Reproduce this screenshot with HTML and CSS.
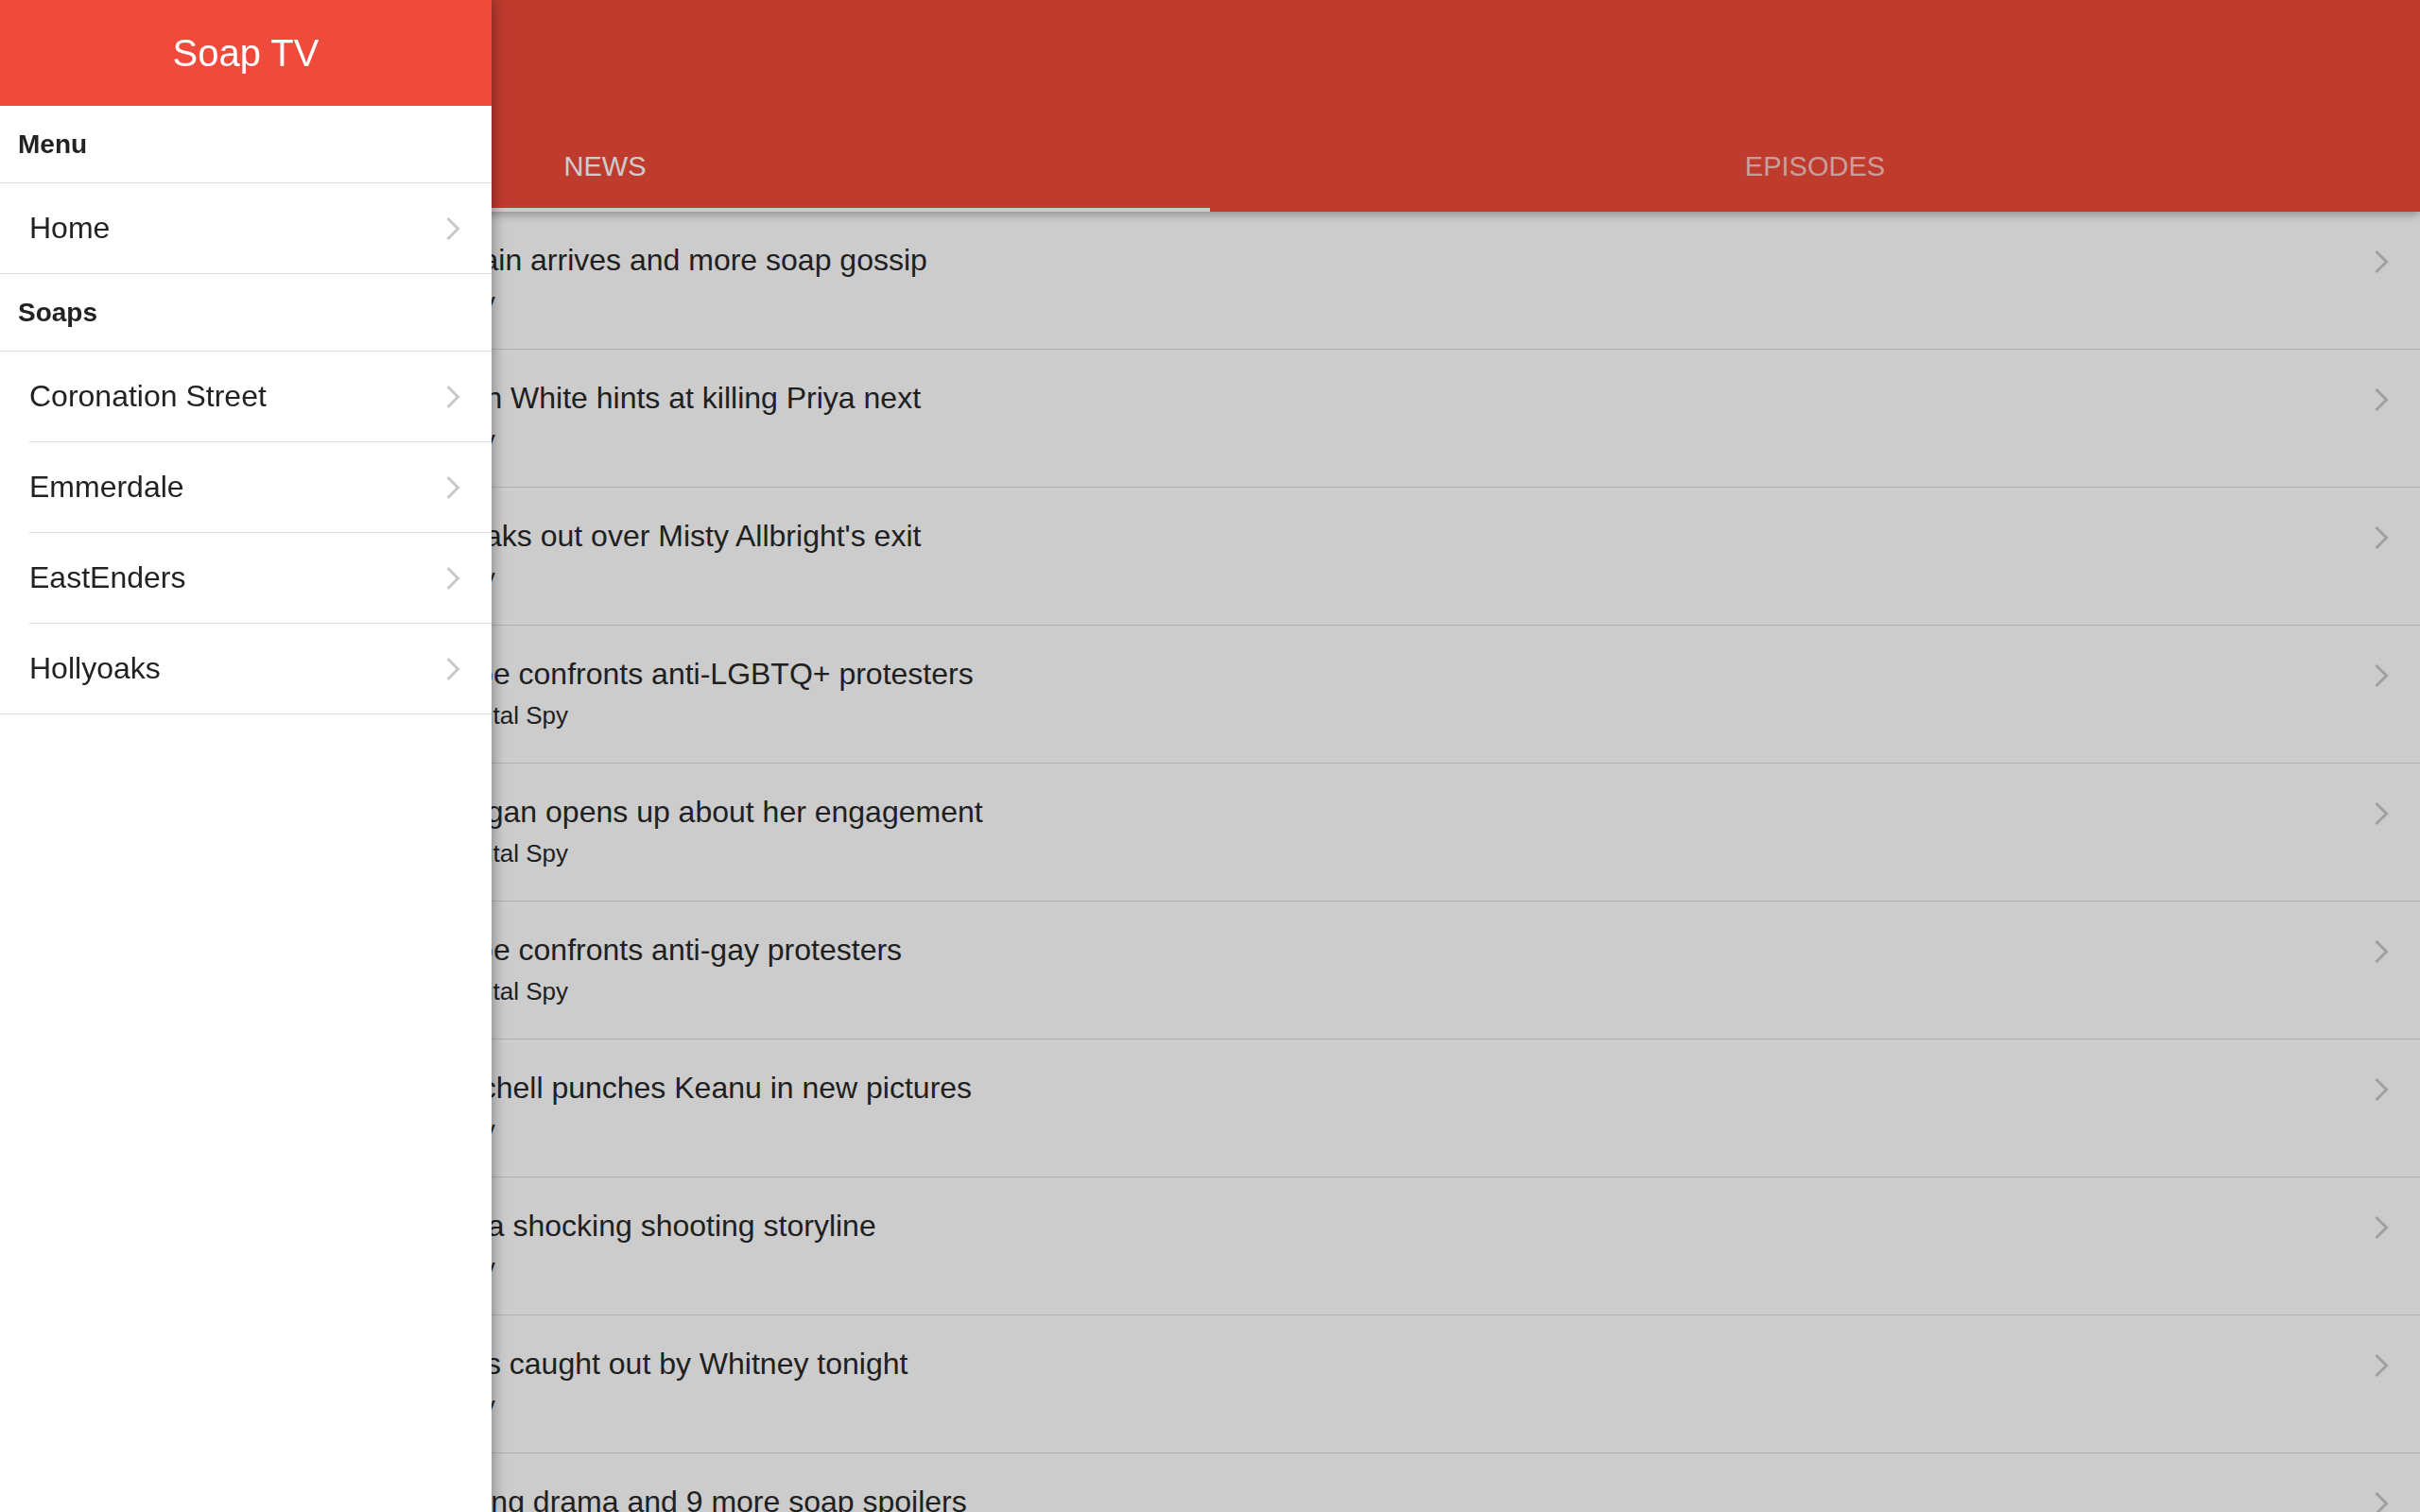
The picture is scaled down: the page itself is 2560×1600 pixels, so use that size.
FILE: index.html
```html
<!DOCTYPE html>
<html lang="en">
<head>
<meta charset="UTF-8">
<meta name="viewport" content="width=device-width, initial-scale=1.0">
<title>Soap TV</title>
<link rel="stylesheet" href="styles.css">
</head>
<body>
<div class="app">

<main class="page">
<header class="page-header">
<div class="toolbar"></div>
<nav class="tabs">
<a href="#" class="tab active">News</a>
<a href="#" class="tab">Episodes</a>
</nav>
</header>

<ul class="news-list">
<li class="news-item">
<div class="news-text">
<h2 class="news-title">Coronation Street's rogue new villain arrives and more soap gossip</h2>
<p class="news-source">Tuesday 9 April 2019 at 10pm · Digital Spy</p>
</div>
<svg class="chevron" viewBox="0 0 16 26"><polyline points="2.5,2 13.5,13 2.5,24"/></svg>
</li>
<li class="news-item">
<div class="news-text">
<h2 class="news-title">Emmerdale News: Twisted Lachlan White hints at killing Priya next</h2>
<p class="news-source">Tuesday 9 April 2019 at 10pm · Digital Spy</p>
</div>
<svg class="chevron" viewBox="0 0 16 26"><polyline points="2.5,2 13.5,13 2.5,24"/></svg>
</li>
<li class="news-item">
<div class="news-text">
<h2 class="news-title">Hollyoaks' Marnie Nightingale speaks out over Misty Allbright's exit</h2>
<p class="news-source">Tuesday 9 April 2019 at 10pm · Digital Spy</p>
</div>
<svg class="chevron" viewBox="0 0 16 26"><polyline points="2.5,2 13.5,13 2.5,24"/></svg>
</li>
<li class="news-item">
<div class="news-text">
<h2 class="news-title">Hollyoaks spoiler: Ste Hay's pal Joe confronts anti-LGBTQ+ protesters</h2>
<p class="news-source">Wednesday 10 April 2019 at 2:30PM · Digital Spy</p>
</div>
<svg class="chevron" viewBox="0 0 16 26"><polyline points="2.5,2 13.5,13 2.5,24"/></svg>
</li>
<li class="news-item">
<div class="news-text">
<h2 class="news-title">Coronation Street's newcomer Megan opens up about her engagement</h2>
<p class="news-source">Wednesday 10 April 2019 at 2:30PM · Digital Spy</p>
</div>
<svg class="chevron" viewBox="0 0 16 26"><polyline points="2.5,2 13.5,13 2.5,24"/></svg>
</li>
<li class="news-item">
<div class="news-text">
<h2 class="news-title">Hollyoaks spoiler: Ste Hay's pal Joe confronts anti-gay protesters</h2>
<p class="news-source">Wednesday 10 April 2019 at 2:30PM · Digital Spy</p>
</div>
<svg class="chevron" viewBox="0 0 16 26"><polyline points="2.5,2 13.5,13 2.5,24"/></svg>
</li>
<li class="news-item">
<div class="news-text">
<h2 class="news-title">EastEnders spoilers: Bad Ben Mitchell punches Keanu in new pictures</h2>
<p class="news-source">Tuesday 9 April 2019 at 10pm · Digital Spy</p>
</div>
<svg class="chevron" viewBox="0 0 16 26"><polyline points="2.5,2 13.5,13 2.5,24"/></svg>
</li>
<li class="news-item">
<div class="news-text">
<h2 class="news-title">Coronation Street bosses confirm a shocking shooting storyline</h2>
<p class="news-source">Tuesday 9 April 2019 at 10pm · Digital Spy</p>
</div>
<svg class="chevron" viewBox="0 0 16 26"><polyline points="2.5,2 13.5,13 2.5,24"/></svg>
</li>
<li class="news-item">
<div class="news-text">
<h2 class="news-title">EastEnders spoilers: Mick Carter is caught out by Whitney tonight</h2>
<p class="news-source">Tuesday 9 April 2019 at 10pm · Digital Spy</p>
</div>
<svg class="chevron" viewBox="0 0 16 26"><polyline points="2.5,2 13.5,13 2.5,24"/></svg>
</li>
<li class="news-item">
<div class="news-text">
<h2 class="news-title">EastEnders spoilers: Secret wedding drama and 9 more soap spoilers</h2>
<p class="news-source">Tuesday 9 April 2019 at 10pm · Digital Spy</p>
</div>
<svg class="chevron" viewBox="0 0 16 26"><polyline points="2.5,2 13.5,13 2.5,24"/></svg>
</li>
</ul>
</main>

<!-- dims the page while the side menu is open -->
<div class="backdrop"></div>

<aside class="menu">
<div class="menu-header">
<h1 class="menu-title">Soap TV</h1>
</div>
<div class="menu-divider">Menu</div>
<a href="#" class="menu-item last">
<span class="menu-item-inner">Home
<svg class="chevron" viewBox="0 0 16 26"><polyline points="2.5,2 13.5,13 2.5,24"/></svg></span>
</a>
<div class="menu-divider">Soaps</div>
<a href="#" class="menu-item">
<span class="menu-item-inner">Coronation Street
<svg class="chevron" viewBox="0 0 16 26"><polyline points="2.5,2 13.5,13 2.5,24"/></svg></span>
</a>
<a href="#" class="menu-item">
<span class="menu-item-inner">Emmerdale
<svg class="chevron" viewBox="0 0 16 26"><polyline points="2.5,2 13.5,13 2.5,24"/></svg></span>
</a>
<a href="#" class="menu-item">
<span class="menu-item-inner">EastEnders
<svg class="chevron" viewBox="0 0 16 26"><polyline points="2.5,2 13.5,13 2.5,24"/></svg></span>
</a>
<a href="#" class="menu-item last">
<span class="menu-item-inner">Hollyoaks
<svg class="chevron" viewBox="0 0 16 26"><polyline points="2.5,2 13.5,13 2.5,24"/></svg></span>
</a>
</aside>

</div>
</body>
</html>
```

FILE: styles.css
```css
body {
margin: 0;
font-family: "Liberation Sans", Arial, sans-serif;
background-color: #fff;
color: #222;
overflow: hidden;
}
a {
color: inherit;
text-decoration: none;
}
.app {
height: 100vh;
overflow: hidden;
}
.page {
display: flex;
flex-direction: column;
height: 100vh;
}
.page-header {
position: relative;
z-index: 1;
background-color: #ef4a3a;
box-shadow: 0 3px 9px rgba(0,0,0,0.3);
}
.toolbar {
height: 128px;
}
.tabs {
display: flex;
height: 96px;
}
.tab {
flex: 1;
display: flex;
justify-content: center;
align-items: center;
font-size: 29px;
text-transform: uppercase;
color: rgba(255,255,255,0.7);
}
.tab.active {
color: #fff;
box-shadow: inset 0 -4px 0 #fff;
}
.news-list {
list-style: none;
margin: 0;
padding: 0;
}
.news-item {
display: flex;
align-items: flex-start;
padding: 32px 33px 34px 32px;
border-bottom: 1px solid #dedede;
color: #282828;
}
.news-text {
flex: 1;
min-width: 0;
}
.news-title {
margin: 0 0 10px;
font-size: 32px;
font-weight: normal;
line-height: 38px;
white-space: nowrap;
}
.news-source {
margin: 0;
font-size: 26px;
line-height: 31px;
white-space: nowrap;
}
.chevron {
flex: none;
width: 16px;
height: 26px;
fill: none;
stroke: #c8c7cc;
stroke-width: 3;
}
.news-item .chevron {
margin-top: 8px;
}
.backdrop {
position: fixed;
top: 0;
left: 0;
right: 0;
bottom: 0;
z-index: 5;
background-color: rgba(0,0,0,0.2);
}
.menu {
position: fixed;
top: 0;
left: 0;
bottom: 0;
z-index: 10;
width: 520px;
background-color: #fff;
box-shadow: 2px 0 14px rgba(0,0,0,0.35);
}
.menu-header {
display: flex;
justify-content: center;
align-items: center;
height: 112px;
background-color: #ef4a3a;
}
.menu-title {
margin: 0;
font-size: 40px;
font-weight: normal;
line-height: 48px;
color: #fff;
}
.menu-divider {
display: flex;
align-items: center;
height: 81px;
padding-left: 19px;
border-bottom: 1px solid #dddddd;
font-size: 28px;
font-weight: bold;
color: #222;
}
.menu-item {
display: block;
padding-left: 31px;
font-size: 32px;
color: #222;
}
.menu-item-inner {
display: flex;
justify-content: space-between;
align-items: center;
height: 95px;
padding-right: 33px;
border-bottom: 1px solid #dddddd;
}
.menu-item.last {
padding-left: 0;
}
.menu-item.last .menu-item-inner {
padding-left: 31px;
}
```
